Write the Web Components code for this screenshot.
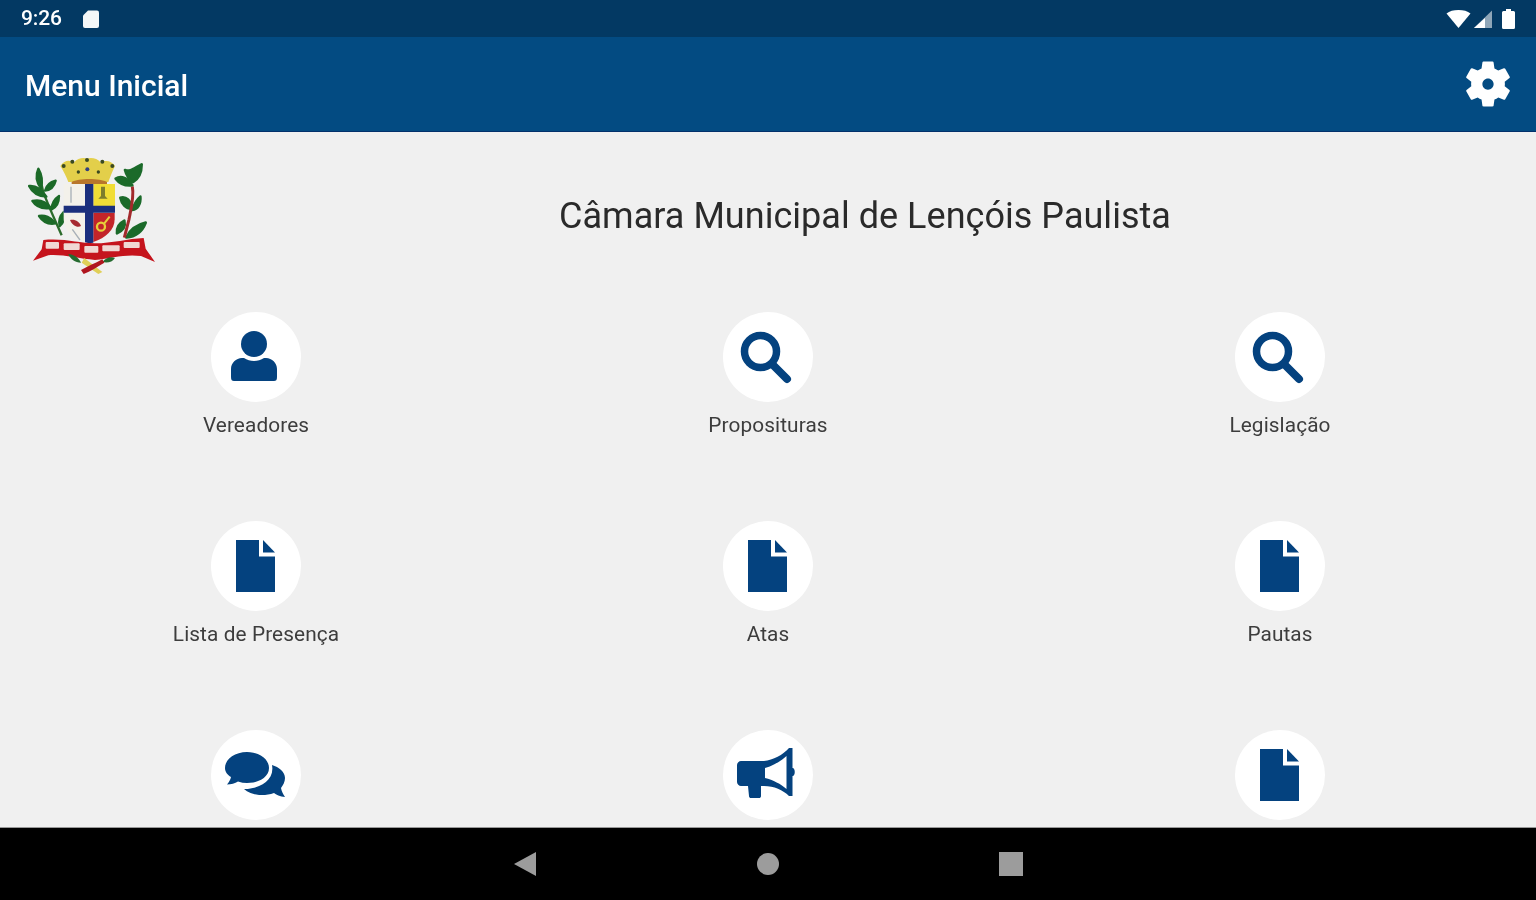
<!DOCTYPE html>
<html lang="pt"><head><meta charset="utf-8"><title>Menu Inicial</title>
<style>
html,body{margin:0;padding:0;width:1536px;height:900px;overflow:hidden;background:#000;font-family:Roboto,"Liberation Sans",sans-serif}
app-shell{filter:blur(.7px)}
</style></head><body>
<app-shell>
  <status-bar slot="status"></status-bar>
  <app-bar slot="bar" title-text="Menu Inicial"></app-bar>
  <city-header slot="content" name="Câmara Municipal de Lençóis Paulista"></city-header>
  <menu-grid slot="content">
    <menu-item icon="person" label="Vereadores"></menu-item>
    <menu-item icon="search" label="Proposituras"></menu-item>
    <menu-item icon="search" label="Legislação"></menu-item>
    <menu-item icon="doc" label="Lista de Presença"></menu-item>
    <menu-item icon="doc" label="Atas"></menu-item>
    <menu-item icon="doc" label="Pautas"></menu-item>
    <menu-item icon="chat"></menu-item>
    <menu-item icon="horn"></menu-item>
    <menu-item icon="doc"></menu-item>
  </menu-grid>
  <nav-bar slot="nav"></nav-bar>
</app-shell>
<script>
function def(name, html){
  customElements.define(name, class extends HTMLElement{
    connectedCallback(){
      if(this.shadowRoot) return;
      const r=this.attachShadow({mode:'open'});
      r.innerHTML=typeof html==='function'?html(this):html;
    }
  });
}
def('app-shell',`<style>
:host{display:flex;flex-direction:column;width:1536px;height:900px;overflow:hidden}
main{flex:1;min-height:0;background:#f0f0f0;overflow:hidden;display:flex;flex-direction:column}
</style><slot name="status"></slot><slot name="bar"></slot><main><slot name="content"></slot></main><slot name="nav"></slot>`);

def('status-bar',`<style>
:host{display:flex;flex:none;height:37px;background:#033963;align-items:center;padding:0 21px 0 21px;color:#fff;font:500 21px/37px Roboto,sans-serif;letter-spacing:-.1px}
svg{display:block}
.sd{margin-left:20px}
.r{margin-left:auto;display:flex;align-items:center;gap:3px}
</style>
<span>9:26</span>
<svg class="sd" width="18" height="20" viewBox="0 0 18 20"><path d="M6 1.500H15a2 2 0 0 1 2 2V17a2 2 0 0 1-2 2H3a2 2 0 0 1-2-2V6.500Z" fill="#f4f7f8"/></svg>
<div class="r">
<svg width="25" height="18" viewBox="0 0 25 18"><path d="M.5 3.500C3.500 1 7.500 0 12.500 0s9 1 12 3.500L12.500 18Z" fill="#fff"/></svg>
<svg width="19" height="18" viewBox="0 0 19 18"><path d="M18 .5V18H0Z" fill="#8fa6b8"/><path d="M11 8V18H0Z" fill="#fff"/></svg>
<svg style="margin-left:6px" width="13" height="20" viewBox="0 0 13 20"><path d="M4 0H9V2H11.500A1.500 1.500 0 0 1 13 3.500V18.500A1.500 1.500 0 0 1 11.500 20H1.500A1.500 1.500 0 0 1 0 18.500V3.500A1.500 1.500 0 0 1 1.500 2H4Z" fill="#fff"/></svg>
</div>`);

def('app-bar',el=>`<style>
:host{display:flex;flex:none;height:95px;box-sizing:border-box;background:#034b82;border-bottom:1px solid #03306b;align-items:center;padding:3px 25px 0;color:#fff}
h1{margin:0;font:500 30px/1 Roboto,sans-serif;letter-spacing:0}
svg{margin-left:auto;margin-right:-4px;margin-top:-3px;display:block}
</style><h1>${el.getAttribute('title-text')}</h1>
<svg width="54" height="54" viewBox="0 0 24 24"><path fill="#fff" d="M19.430 12.980c.04-.32.07-.64.07-.98s-.03-.66-.07-.98l2.110-1.650c.19-.15.24-.42.12-.64l-2-3.460c-.12-.22-.39-.3-.61-.22l-2.490 1c-.52-.4-1.080-.73-1.690-.98l-.38-2.650C14.460 2.180 14.250 2 14 2h-4c-.25 0-.46.18-.49.42l-.38 2.650c-.61.25-1.170.59-1.690.98l-2.490-1c-.23-.09-.49 0-.61.22l-2 3.460c-.13.22-.07.49.12.64l2.110 1.650c-.04.32-.07.65-.07.98s.03.66.07.98l-2.110 1.650c-.19.15-.24.42-.12.64l2 3.460c.12.22.39.3.61.22l2.490-1c.52.4 1.080.73 1.690.98l.38 2.650c.03.24.24.42.49.42h4c.25 0 .46-.18.49-.42l.38-2.650c.61-.25 1.170-.59 1.690-.98l2.490 1c.23.09.49 0 .61-.22l2-3.460c.12-.22.07-.49-.12-.64l-2.110-1.650zM12 14.500c-1.380 0-2.500-1.120-2.500-2.500s1.120-2.500 2.500-2.500 2.500 1.120 2.500 2.500-1.120 2.500-2.500 2.500z"/></svg>`);

const crest=`<svg width="130" height="120" viewBox="39 30 390 360" aria-hidden="true">
<!-- left branch -->
<path d="M70 70L85 140 110 200 140 268" fill="none" stroke="#2c6b2c" stroke-width="7"/>
<g fill="#1c6a28" stroke="#1c6a28" stroke-width="7" stroke-linejoin="round">
<path d="M70 68C62 85 62 105 78 128 84 105 80 85 70 68Z"/>
<path d="M42 120C60 118 80 130 94 152 70 152 52 140 42 120Z"/>
<path d="M122 104C106 108 94 118 90 134 108 132 118 120 122 104Z"/>
<path d="M52 165C72 160 92 166 108 186 84 190 64 184 52 165Z"/>
<path d="M132 150C120 158 110 172 110 190 124 184 132 170 132 150Z"/>
<path d="M72 210C88 206 108 214 122 232 102 236 84 228 72 210Z"/>
<path d="M146 198C136 208 130 224 134 240 146 230 150 214 146 198Z"/>
</g>
<!-- right branch -->
<g fill="#1b6a2a" stroke="#1b6a2a" stroke-width="8" stroke-linejoin="round">
<path d="M302 98C318 88 340 96 352 118 332 120 314 114 302 98Z"/>
<path d="M330 72C345 78 352 70 380 55 380 78 372 98 354 108 342 100 334 88 330 72Z"/>
<path d="M316 155C334 150 348 164 350 188 332 188 320 174 316 155Z"/>
<path d="M376 152C366 160 358 172 352 192 368 190 378 174 376 152Z"/>
<path d="M306 262C304 244 312 232 328 224 332 240 324 254 306 262Z"/>
<path d="M334 274C346 250 366 236 392 230 382 256 362 272 334 274Z"/>
</g>
<path d="M352 122C358 150 348 190 342 220L328 275" fill="none" stroke="#a32a2c" stroke-width="9"/>
<!-- crown -->
<path d="M136 60C150 40 165 42 176 50 188 36 206 34 216 38 228 34 246 36 258 50 270 42 288 42 300 60 292 76 286 92 280 108H160C154 92 146 76 136 60Z" fill="#e3cf4a"/>
<g fill="#3b4a22"><circle cx="146" cy="60" r="6"/><circle cx="172" cy="47" r="6"/><circle cx="216" cy="42" r="6"/><circle cx="262" cy="47" r="6"/><circle cx="292" cy="60" r="6"/><circle cx="190" cy="78" r="5"/><circle cx="250" cy="78" r="5"/></g>
<circle cx="217" cy="70" r="6" fill="#33407f"/>
<path d="M170 108C190 96 255 96 276 108V116H170Z" fill="#b8762c"/>
<!-- shield -->
<path d="M146 114H300V215C300 255 270 280 222 292 176 280 146 255 146 215Z" fill="#f3f1ea"/>
<path d="M235 114H300V180H235Z" fill="#f1dd36"/>
<path d="M235 200H299V220C299 252 272 276 235 288Z" fill="#c3252a"/>
<path d="M210 114H235V290L222 292 210 289Z" fill="#1b2f7d"/>
<path d="M146 179H300V200H146Z" fill="#1b2f7d"/>
<path d="M258 122H270V150L278 158H250L258 150Z" fill="#7d7d2c"/>
<circle cx="258" cy="242" r="12" fill="none" stroke="#e7cf3a" stroke-width="7"/>
<path d="M268 232L284 212" stroke="#e7cf3a" stroke-width="6"/>
<path d="M165 222C178 218 194 226 198 240 188 246 172 240 165 222Z" fill="#a62a30"/>
<path d="M168 122V170M172 250L195 282" stroke="#a8b0b8" stroke-width="4" fill="none"/>
<!-- ribbon -->
<path d="M85 282C150 276 190 292 240 292 290 292 340 278 386 276L392 308 420 348 378 330C330 324 290 336 240 342 190 338 140 324 100 328L54 344 80 310Z" fill="#c5141d"/>
<g fill="#f0d8d4"><rect x="92" y="288" width="40" height="20" rx="3"/><rect x="146" y="292" width="48" height="20" rx="3"/><rect x="208" y="300" width="42" height="20" rx="3"/><rect x="262" y="298" width="52" height="18" rx="3"/><rect x="326" y="288" width="48" height="18" rx="3"/></g>
<path d="M160 324C178 326 192 336 198 350 180 350 166 340 160 324Z" fill="#256b30"/>
<path d="M300 336C286 330 272 336 262 348 278 352 292 348 300 336Z" fill="#256b30"/>
<path d="M208 336L262 378 250 384 200 350Z" fill="#e0cf58"/>
<path d="M198 372C216 362 240 352 262 340L268 350C248 362 226 376 206 384Z" fill="#b0161f"/>
</svg>`;
def('city-header',el=>`<style>
:host{display:flex;flex:none;align-items:center;height:168px;margin-bottom:12px;box-sizing:border-box}
.logo{flex:none;width:194px;padding-left:28px;box-sizing:border-box}
svg{display:block;filter:blur(.6px)}
h2{flex:1;margin:0;text-align:center;font:400 36px/1 Roboto,sans-serif;letter-spacing:.03px;color:#2a2a2a}
</style><div class="logo">${crest}</div><h2>${el.getAttribute('name')}</h2>`);

def('menu-grid',`<style>
:host{display:grid;flex:none;grid-template-columns:repeat(3,512px);grid-auto-rows:209px}
</style><slot></slot>`);

const P={
 person:`<svg style="transform:translateX(-2px)" width="48" height="54" viewBox="0 0 48 54"><circle cx="24" cy="14" r="13"/><path d="M1 47V39C1 33 6 28 12 28H14C17 30 20.500 31 24 31S31 30 34 28H36C42 28 47 33 47 39V47C47 50 46 51 44 51H4C2 51 1 50 1 47Z"/></svg>`,
 search:`<svg style="transform:translateX(-2px)" width="54" height="54" viewBox="0 0 54 54"><circle cx="21.500" cy="21.500" r="16" fill="none" stroke="#04427f" stroke-width="7.500"/><path d="M33 34L48 49" fill="none" stroke="#04427f" stroke-width="8" stroke-linecap="round"/></svg>`,
 doc:`<svg width="40" height="52" viewBox="0 0 40 52"><path d="M0 0H23V16.500H39V52H0Z"/><path d="M27 0L39 12.500H27Z"/></svg>`,
 chat:`<svg style="transform:translate(-1px,-1px)" width="60" height="45" viewBox="0 0 60 45"><path d="M22 0C34 0 44 7 44 16S34 31 22 31C19 31 16 30.500 13 29.500 10 31.500 6 32.500 2 32.500 4 30 5.500 27.500 6 25 2.500 23 0 20 0 16 0 7 10 0 22 0Z"/><path d="M47 13C54 15 60 20 60 26 60 30 58 33 56 36 56.500 39 58 42 60 45 55 44.500 51 42.500 49 41 45 42.500 41 43 37 43 30 43 23 41 19 37 34 37 50 29 47 13Z"/></svg>`,
 horn:`<svg style="transform:translate(-2px,-2px)" width="59" height="50" viewBox="0 0 59 50"><path fill-rule="evenodd" d="M4 13H27C36 12 46 7 52 0H55.500V20C58.500 20 58.500 28 55.500 28V48H52C46 42 37 38 27 38H24L24 48C24 49.500 23 50 22 50H14C13 50 12 49.500 12 48L11 38H4C2 38 0 36 0 34V17C0 15 2 13 4 13ZM49.500 8C44 13 36 18 28 20V30C36 32 44 36 49.500 41Z"/></svg>`
};
def('menu-item',el=>{
 const l=el.getAttribute('label');
 return `<style>
:host{display:flex;flex-direction:column;align-items:center;overflow:visible}
.c{flex:none;width:90px;height:90px;border-radius:50%;background:#fff;display:flex;align-items:center;justify-content:center;color:#04427f}
svg{display:block;fill:currentColor}
span{margin-top:12px;font:400 20.800px/23px Roboto,sans-serif;letter-spacing:.1px;color:#3d3d3d;white-space:nowrap}
</style><div class="c">${P[el.getAttribute('icon')]}</div>${l?`<span>${l}</span>`:''}`;
});

def('nav-bar',`<style>
:host{display:flex;flex:none;height:73px;background:#000;border-top:1px solid #999;box-sizing:border-box;justify-content:center;align-items:center;gap:0}
div{width:243px;display:flex;justify-content:center}
svg{display:block}
</style>
<div><svg width="24" height="26" viewBox="0 0 24 26"><path d="M23 1V25L1 13Z" fill="#9c9c9c"/></svg></div>
<div><svg width="24" height="24" viewBox="0 0 24 24"><circle cx="12" cy="12" r="11" fill="#9c9c9c"/></svg></div>
<div><svg width="24" height="24" viewBox="0 0 24 24"><rect width="24" height="24" fill="#9c9c9c"/></svg></div>`);
</script>
</body></html>
